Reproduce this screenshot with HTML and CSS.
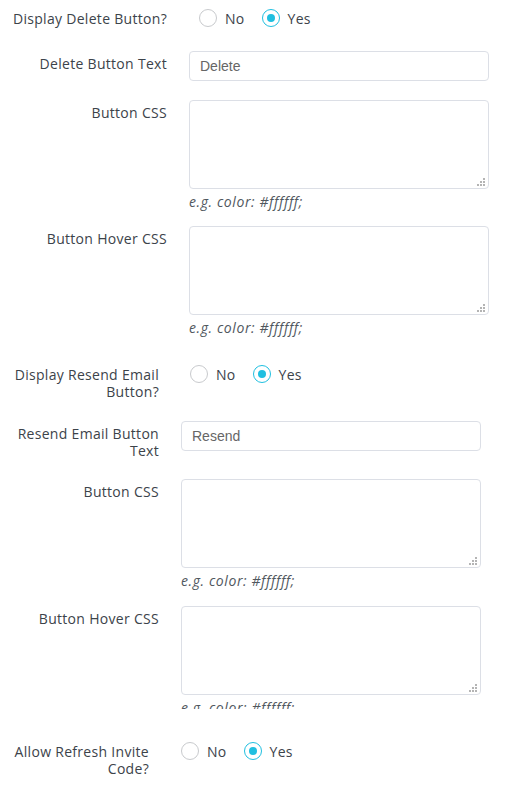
FILE: index.html
```html
<!DOCTYPE html>
<html>
<head>
<meta charset="utf-8">
<link rel="stylesheet" href="styles.css">
</head>
<body>
<div class="section s1">
  <div class="row r1">
    <div class="label">Display Delete Button?</div>
    <div class="control">
      <div class="radios offset">
        <span class="radio"></span><span class="rtext">No</span>
        <span class="radio checked"></span><span class="rtext">Yes</span>
      </div>
    </div>
  </div>
  <div class="row r2">
    <div class="label lbl-field">Delete Button Text</div>
    <div class="control"><input class="text" type="text" value="Delete"></div>
  </div>
  <div class="row r3">
    <div class="label lbl-field">Button CSS</div>
    <div class="control">
      <div class="area-wrap"><textarea class="area"></textarea></div>
      <div class="hint">e.g. color: #ffffff;</div>
    </div>
  </div>
  <div class="row r4">
    <div class="label lbl-field">Button Hover CSS</div>
    <div class="control">
      <div class="area-wrap"><textarea class="area"></textarea></div>
      <div class="hint">e.g. color: #ffffff;</div>
    </div>
  </div>
</div>

<div class="section s2">
  <div class="row r5">
    <div class="label">Display Resend Email Button?</div>
    <div class="control">
      <div class="radios offset2">
        <span class="radio"></span><span class="rtext">No</span>
        <span class="radio checked"></span><span class="rtext">Yes</span>
      </div>
    </div>
  </div>
  <div class="row r6">
    <div class="label lbl-field">Resend Email Button Text</div>
    <div class="control"><input class="text" type="text" value="Resend"></div>
  </div>
  <div class="row r7">
    <div class="label lbl-field">Button CSS</div>
    <div class="control">
      <div class="area-wrap"><textarea class="area"></textarea></div>
      <div class="hint">e.g. color: #ffffff;</div>
    </div>
  </div>
  <div class="row r8">
    <div class="label lbl-field">Button Hover CSS</div>
    <div class="control">
      <div class="area-wrap"><textarea class="area"></textarea></div>
      <div class="hint">e.g. color: #ffffff;</div>
    </div>
  </div>
</div>

<div class="section s3">
  <div class="row r9">
    <div class="label">Allow Refresh Invite Code?</div>
    <div class="control">
      <div class="radios">
        <span class="radio"></span><span class="rtext">No</span>
        <span class="radio checked"></span><span class="rtext">Yes</span>
      </div>
    </div>
  </div>
</div>
</body>
</html>
```

FILE: styles.css
```css
html, body {
  margin: 0;
  padding: 0;
  background: #ffffff;
}

body {
  font-family: "Open Sans", "DejaVu Sans", sans-serif;
  font-size: 14px;
  color: #3c434a;
  width: 510px;
  height: 801px;
  overflow: hidden;
}

.section {
  padding-left: 8px;
}

.s1 {
  padding-top: 9px;
  --labelw: 159px;
  --gap: 22px;
}

.s2 {
  margin-top: 27px;
  height: 344px;
  overflow: hidden;
  --labelw: 151px;
  --gap: 22px;
}

.s3 {
  margin-top: 33px;
  --labelw: 141px;
  --gap: 32px;
}

.row {
  display: grid;
  grid-template-columns: var(--labelw) 300px;
  column-gap: var(--gap);
  align-items: start;
}

.label {
  text-align: right;
  line-height: 17px;
  padding-top: 1px;
  letter-spacing: 0.3px;
}

.label.lbl-field {
  padding-top: 4px;
}

.r2 { margin-top: 24px; }
.r3 { margin-top: 19px; }
.r4 { margin-top: 14px; }
.r6 { margin-top: 21px; }
.r7 { margin-top: 20px; }
.r8 { margin-top: 15px; }

.control {
  display: flex;
  flex-direction: column;
}

.radios {
  display: flex;
  align-items: center;
  height: 18px;
}

.radios.offset { margin-left: 10px; }
.radios.offset2 { margin-left: 9px; }

.radio {
  width: 18px;
  height: 18px;
  box-sizing: border-box;
  border: 1px solid #c8cacd;
  border-radius: 50%;
  display: flex;
  align-items: center;
  justify-content: center;
  flex: none;
}

.radio.checked {
  border-color: #1fbfe0;
}

.radio.checked::after {
  content: "";
  width: 8px;
  height: 8px;
  border-radius: 50%;
  background: #1fbfe0;
}

.rtext {
  margin-left: 8px;
  margin-right: 17px;
  line-height: 17px;
  letter-spacing: 0.3px;
}

.text {
  box-sizing: border-box;
  width: 300px;
  height: 30px;
  margin: 0;
  border: 1px solid #dcdfe6;
  border-radius: 4px;
  padding: 0 10px;
  font-family: "Liberation Sans", Arial, sans-serif;
  font-size: 14px;
  color: #666666;
  background: #fff;
  outline: none;
}

.area-wrap {
  position: relative;
  width: 300px;
  height: 89px;
}

.area-wrap::after {
  content: "";
  position: absolute;
  right: 4px;
  bottom: 3px;
  width: 2px;
  height: 2px;
  background: #b4b4b4;
  box-shadow: -3px 0 0 #b4b4b4, -6px 0 0 #b4b4b4, 0 -3px 0 #b4b4b4, -3px -3px 0 #b4b4b4, 0 -6px 0 #b4b4b4;
}

.area {
  box-sizing: border-box;
  width: 300px;
  height: 89px;
  margin: 0;
  border: 1px solid #dcdfe6;
  border-radius: 4px;
  padding: 6px 10px;
  font-family: "Liberation Sans", Arial, sans-serif;
  font-size: 14px;
  background: #fff;
  display: block;
  outline: none;
  resize: none;
}

.hint {
  margin-top: 3px;
  line-height: 20px;
  font-style: italic;
  color: #50575e;
  letter-spacing: 0.6px;
}
```
